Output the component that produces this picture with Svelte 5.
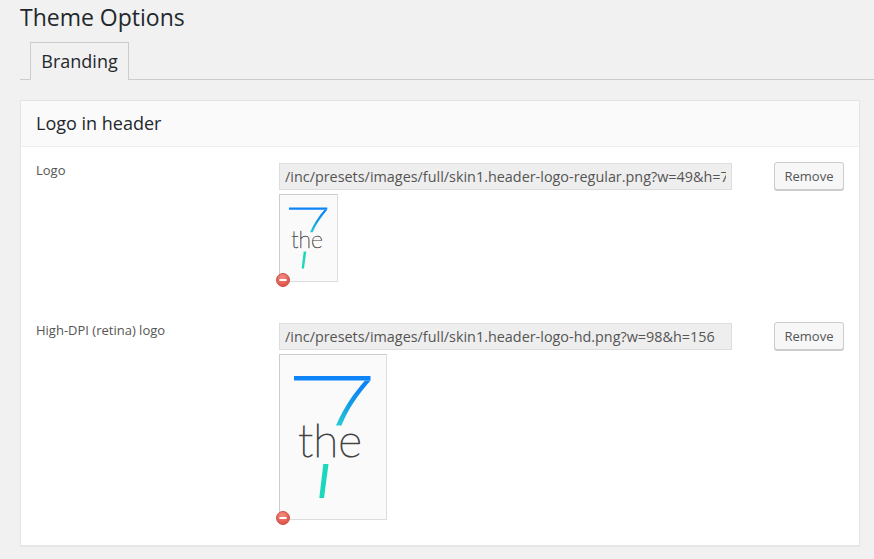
<script>
	const rows = [
		{
			label: 'Logo',
			url: '/inc/presets/images/full/skin1.header-logo-regular.png?w=49&h=78',
			width: 49,
			height: 78
		},
		{
			label: 'High-DPI (retina) logo',
			url: '/inc/presets/images/full/skin1.header-logo-hd.png?w=98&h=156',
			width: 98,
			height: 156
		}
	];
</script>

<svg class="defs" width="0" height="0" aria-hidden="true">
	<defs>
		<linearGradient id="seven" gradientUnits="userSpaceOnUse" x1="80" y1="28" x2="54" y2="66">
			<stop offset="0" stop-color="#0d84f7" />
			<stop offset="0.5" stop-color="#0f9ee6" />
			<stop offset="1" stop-color="#2cc9d6" />
		</linearGradient>
		<radialGradient id="del" cx="0.45" cy="0.3" r="0.8">
			<stop offset="0" stop-color="#f58d82" />
			<stop offset="1" stop-color="#d9443a" />
		</radialGradient>
	</defs>
</svg>

<div class="wrap">
	<h2 class="page-title">Theme Options</h2>
	<div class="tabs">
		<span class="tab">Branding</span>
	</div>

	<section class="panel">
		<h3 class="panel-title">Logo in header</h3>
		<div class="panel-body">
			{#each rows as row}
				<div class="row">
					<span class="label">{row.label}</span>
					<div class="field">
						<input class="url" type="text" readonly value={row.url} />
						<div class="preview">
							<svg viewBox="0 0 98 156" width={row.width} height={row.height}>
								<path d="M86.500 21.500C74 36 64 50 57.500 66.500H52C60 48 70 34 81 21.500Z" fill="url(#seven)" />
								<path d="M10 17H86.500V21.500H10Z" fill="#0d84f7" />
								<text x="46" y="98" text-anchor="middle" class="logo-word">the</text>
								<path d="M39.300 105H44.500L40 139H35.300Z" fill="#1bd8bd" />
							</svg>
							<span class="delete">
								<svg viewBox="0 0 14 14" width="14" height="14">
									<circle cx="7" cy="7" r="6.500" fill="url(#del)" stroke="#c9544c" stroke-width="1" />
									<rect x="3.500" y="6" width="7" height="2" fill="#fff" />
								</svg>
							</span>
						</div>
					</div>
					<button class="remove">Remove</button>
				</div>
			{/each}
		</div>
	</section>
</div>

<style>
	:global(body) {
		background: #f1f1f1;
		font-family: 'Open Sans', sans-serif;
		color: #444;
	}

	.defs {
		position: absolute;
	}

	.wrap {
		padding: 0 15px 0 20px;
		height: 559px;
		box-sizing: border-box;
		overflow: hidden;
	}

	.page-title {
		margin: 0;
		height: 42px;
		font-size: 23px;
		line-height: 35px;
		font-weight: 400;
		color: #23282d;
	}

	.tabs {
		display: flex;
		margin-right: -15px;
		padding-left: 10px;
		height: 37px;
		border-bottom: 1px solid #ccc;
	}

	.tab {
		box-sizing: border-box;
		width: 99px;
		height: 38px;
		border: 1px solid #ccc;
		border-bottom: none;
		background: #f1f1f1;
		font-size: 18px;
		line-height: 36px;
		text-align: center;
		color: #23282d;
	}

	.panel {
		margin-top: 20px;
		width: 840px;
		box-sizing: border-box;
		background: #fff;
		border: 1px solid #e5e5e5;
		box-shadow: 0 1px 1px rgba(0, 0, 0, 0.04);
	}

	.panel-title {
		margin: 0;
		height: 46px;
		box-sizing: border-box;
		padding-left: 15px;
		background: #fafafa;
		border-bottom: 1px solid #eee;
		font-size: 18px;
		font-weight: 400;
		line-height: 45px;
		color: #23282d;
	}

	.panel-body {
		display: flex;
		flex-direction: column;
		gap: 40px;
		padding: 15px 15px 25px;
	}

	.row {
		display: grid;
		grid-template-columns: 243px 1fr 70px;
	}

	.label {
		font-size: 13px;
		line-height: 16px;
		color: #555;
	}

	.field {
		display: flex;
		flex-direction: column;
		align-items: flex-start;
		gap: 4px;
		padding-top: 1px;
	}

	.url {
		box-sizing: border-box;
		width: 453px;
		height: 27px;
		margin: 0;
		padding: 0 5px 1px;
		border: 1px solid #ddd;
		background: #eee;
		font-family: inherit;
		font-size: 14.4px;
		color: #555;
		outline: none;
	}

	.preview {
		position: relative;
		padding: 4px;
		border: 1px solid #ddd;
		border-left-color: #ccc;
		border-top-color: #ccc;
		background: #fafafa;
	}

	.preview > svg {
		display: block;
	}

	.logo-word {
		font-family: Lato, sans-serif;
		font-weight: 100;
		font-size: 46px;
		fill: #444;
		stroke: #444;
		stroke-width: 1;
	}

	.delete {
		position: absolute;
		left: -4px;
		bottom: -6px;
		width: 14px;
		height: 14px;
	}

	.delete svg {
		display: block;
	}

	.remove {
		box-sizing: border-box;
		width: 70px;
		height: 28px;
		margin: 0;
		padding: 0;
		border: 1px solid #ccc;
		border-radius: 3px;
		background: #f7f7f7;
		box-shadow: 0 1px 0 #ccc;
		font-family: inherit;
		font-size: 13px;
		color: #555;
	}
</style>
